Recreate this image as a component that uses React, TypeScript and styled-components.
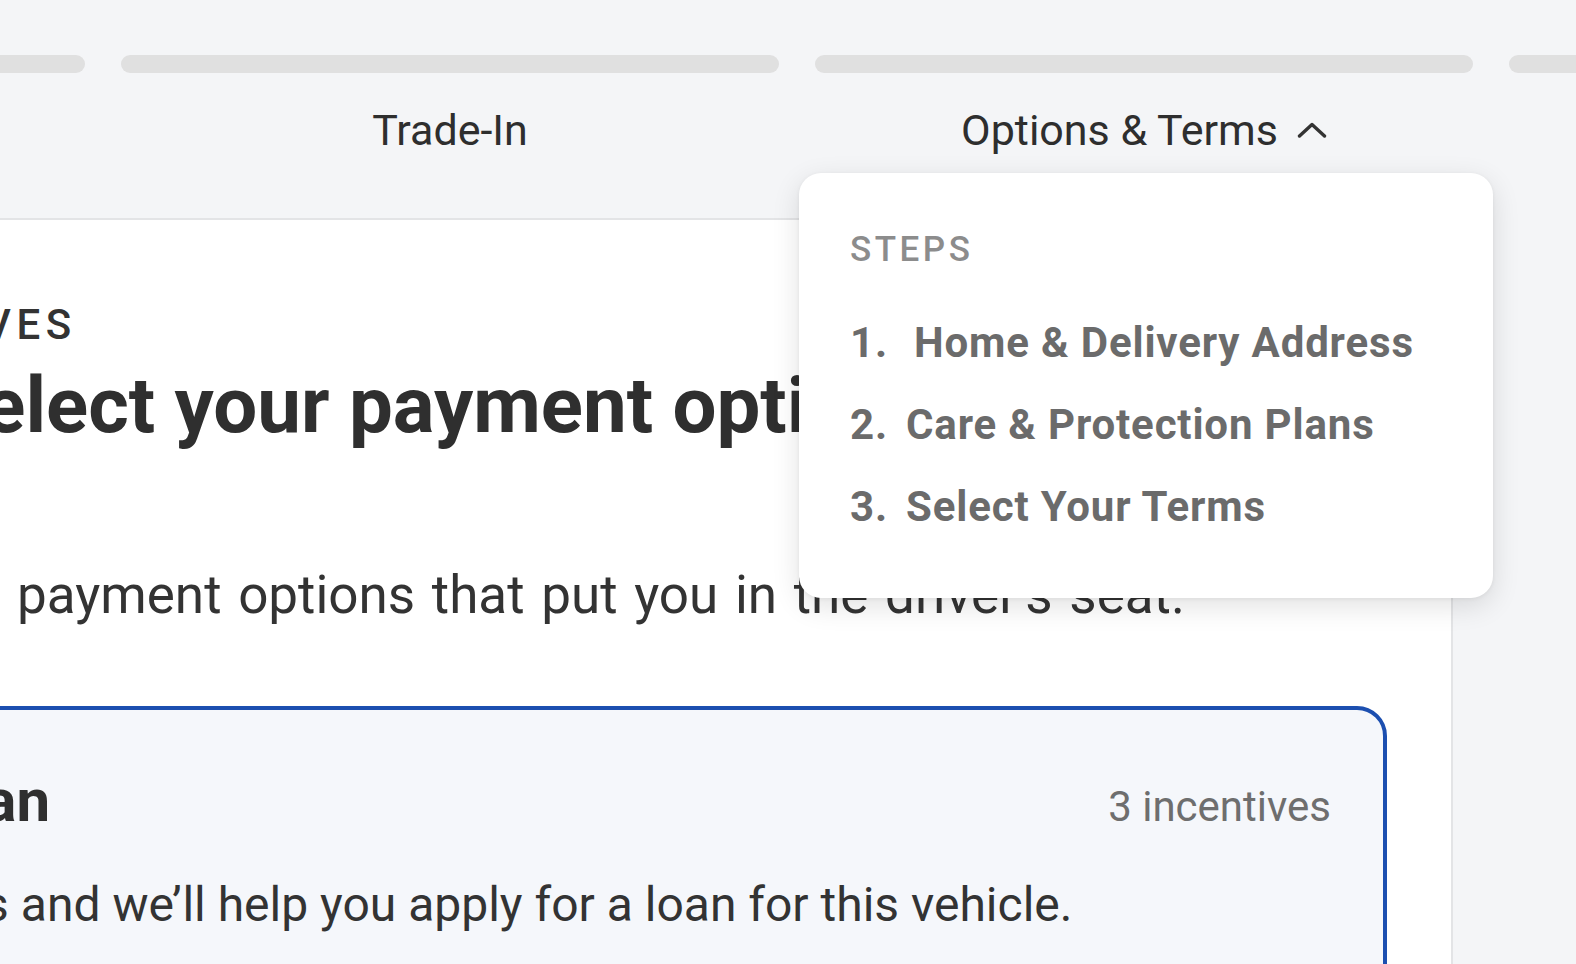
import React from "react";
import styled, { createGlobalStyle } from "styled-components";

const GlobalStyle = createGlobalStyle`
  html, body {
    margin: 0;
    padding: 0;
    overflow: hidden;
    background: #f4f5f7;
  }
  body {
    font-family: Roboto, "Liberation Sans", Arial, sans-serif;
    color: #333333;
  }
  *, *::before, *::after { box-sizing: border-box; }
`;

const Page = styled.div`
  width: 1576px;
  height: 964px;
  overflow: hidden;
  background: #f4f5f7;
`;

const Nav = styled.nav`
  padding: 55px 0 63px;
`;

const StepTrack = styled.ol`
  display: flex;
  gap: 36px;
  margin: 0 0 0 -573px;
  padding: 0;
  list-style: none;
`;

const Step = styled.li`
  position: relative;
  flex: 0 0 658px;
  display: flex;
  flex-direction: column;
  align-items: center;
  gap: 32px;
`;

const Bar = styled.div`
  width: 100%;
  height: 18px;
  border-radius: 9px;
  background: #e0e0e0;
`;

const StepLabel = styled.div`
  display: flex;
  align-items: center;
  gap: 19px;
  font-size: 43px;
  line-height: 50px;
  font-weight: 400;
  color: #2e2e2e;
  white-space: nowrap;
`;

const Menu = styled.div`
  position: absolute;
  z-index: 10;
  top: calc(100% + 18px);
  left: -16px;
  width: 694px;
  padding: 57px 40px 50px 51px;
  background: #ffffff;
  border-radius: 22px;
  box-shadow: 0 8px 28px rgba(0, 0, 0, 0.12), 0 1px 4px rgba(0, 0, 0, 0.06);
`;

const MenuHeading = styled.div`
  font-size: 35px;
  line-height: 40px;
  font-weight: 500;
  letter-spacing: 0.1em;
  color: #8c8c8c;
`;

const MenuList = styled.ol`
  list-style: none;
  margin: 32px 0 0;
  padding: 0;
`;

const MenuItem = styled.li`
  display: flex;
  font-size: 42px;
  line-height: 82px;
  font-weight: 700;
  letter-spacing: 0.02em;
  color: #6b6b6b;
  white-space: nowrap;
`;

const Num = styled.span<{ $wide?: boolean }>`
  min-width: ${(p) => (p.$wide ? "64px" : "56px")};
  font-variant-numeric: tabular-nums;
`;

const Panel = styled.main`
  margin-left: -275px;
  width: 1728px;
  min-height: 760px;
  padding: 80px 64px 0 60px;
  background: #ffffff;
  border-top: 2px solid #e3e4e6;
  border-right: 2px solid #e3e4e6;
`;

const Eyebrow = styled.div`
  font-size: 42px;
  line-height: 50px;
  font-weight: 500;
  letter-spacing: 5.6px;
  color: #333333;
  white-space: nowrap;
`;

const Title = styled.h1`
  margin: 11px 0 0;
  font-size: 78px;
  line-height: 90px;
  font-weight: 700;
  color: #2f2f2f;
  white-space: nowrap;
`;

const Lead = styled.p`
  margin: 112px 0 0;
  font-size: 53px;
  line-height: 64px;
  font-weight: 400;
  word-spacing: 3.5px;
  color: #333333;
  white-space: nowrap;
`;

const OptionCard = styled.section<{ $selected?: boolean }>`
  margin-top: 79px;
  padding: 56px 52px 60px 73px;
  border: 4px solid ${(p) => (p.$selected ? "#1c4fb0" : "#d9d9d9")};
  border-radius: 30px;
  background: #f5f7fb;
`;

const CardHead = styled.div`
  display: flex;
  align-items: baseline;
  justify-content: space-between;
`;

const CardTitleGroup = styled.div`
  display: flex;
  align-items: center;
  gap: 16px;
`;

const Radio = styled.span<{ $checked?: boolean }>`
  width: 40px;
  height: 40px;
  border-radius: 50%;
  border: 4px solid #1c4fb0;
  background: ${(p) =>
    p.$checked ? "radial-gradient(circle, #1c4fb0 0 9px, #fff 10px)" : "#fff"};
`;

const CardTitle = styled.h2`
  margin: 0;
  font-size: 60px;
  line-height: 70px;
  font-weight: 700;
  color: #2f2f2f;
`;

const Count = styled.span`
  font-size: 42px;
  line-height: 50px;
  font-weight: 400;
  color: #6e6e6e;
  white-space: nowrap;
`;

const CardText = styled.p`
  margin: 41px 0 0;
  font-size: 48px;
  line-height: 56px;
  font-weight: 400;
  color: #333333;
  white-space: nowrap;
`;

const Chevron = () => (
  <svg width="30" height="16" viewBox="0 0 30 16" fill="none">
    <polyline
      points="2.5,14 15,2.5 27.5,14"
      stroke="#333333"
      strokeWidth="3.4"
      strokeLinecap="round"
      strokeLinejoin="round"
    />
  </svg>
);

const steps = ["Vehicle", "Trade-In", "Options & Terms", "Review & Sign"];
const subSteps = ["Home & Delivery Address", "Care & Protection Plans", "Select Your Terms"];

export default function App() {
  const openIndex = 2;
  return (
    <Page>
      <GlobalStyle />
      <Nav>
        <StepTrack>
          {steps.map((s, i) => (
            <Step key={s}>
              <Bar />
              <StepLabel>
                {s}
                {i === openIndex && <Chevron />}
              </StepLabel>
              {i === openIndex && (
                <Menu>
                  <MenuHeading>STEPS</MenuHeading>
                  <MenuList>
                    {subSteps.map((t, n) => (
                      <MenuItem key={t}>
                        <Num $wide={n === 0}>{n + 1}.</Num>
                        <span>{t}</span>
                      </MenuItem>
                    ))}
                  </MenuList>
                </Menu>
              )}
            </Step>
          ))}
        </StepTrack>
      </Nav>
      <Panel>
        <Eyebrow>INCENTIVES</Eyebrow>
        <Title>And select your payment options</Title>
        <Lead>Compare payment options that put you in the driver’s seat.</Lead>
        <OptionCard $selected>
          <CardHead>
            <CardTitleGroup>
              <Radio $checked />
              <CardTitle>Loan</CardTitle>
            </CardTitleGroup>
            <Count>3 incentives</Count>
          </CardHead>
          <CardText>Details and we’ll help you apply for a loan for this vehicle.</CardText>
        </OptionCard>
      </Panel>
    </Page>
  );
}
